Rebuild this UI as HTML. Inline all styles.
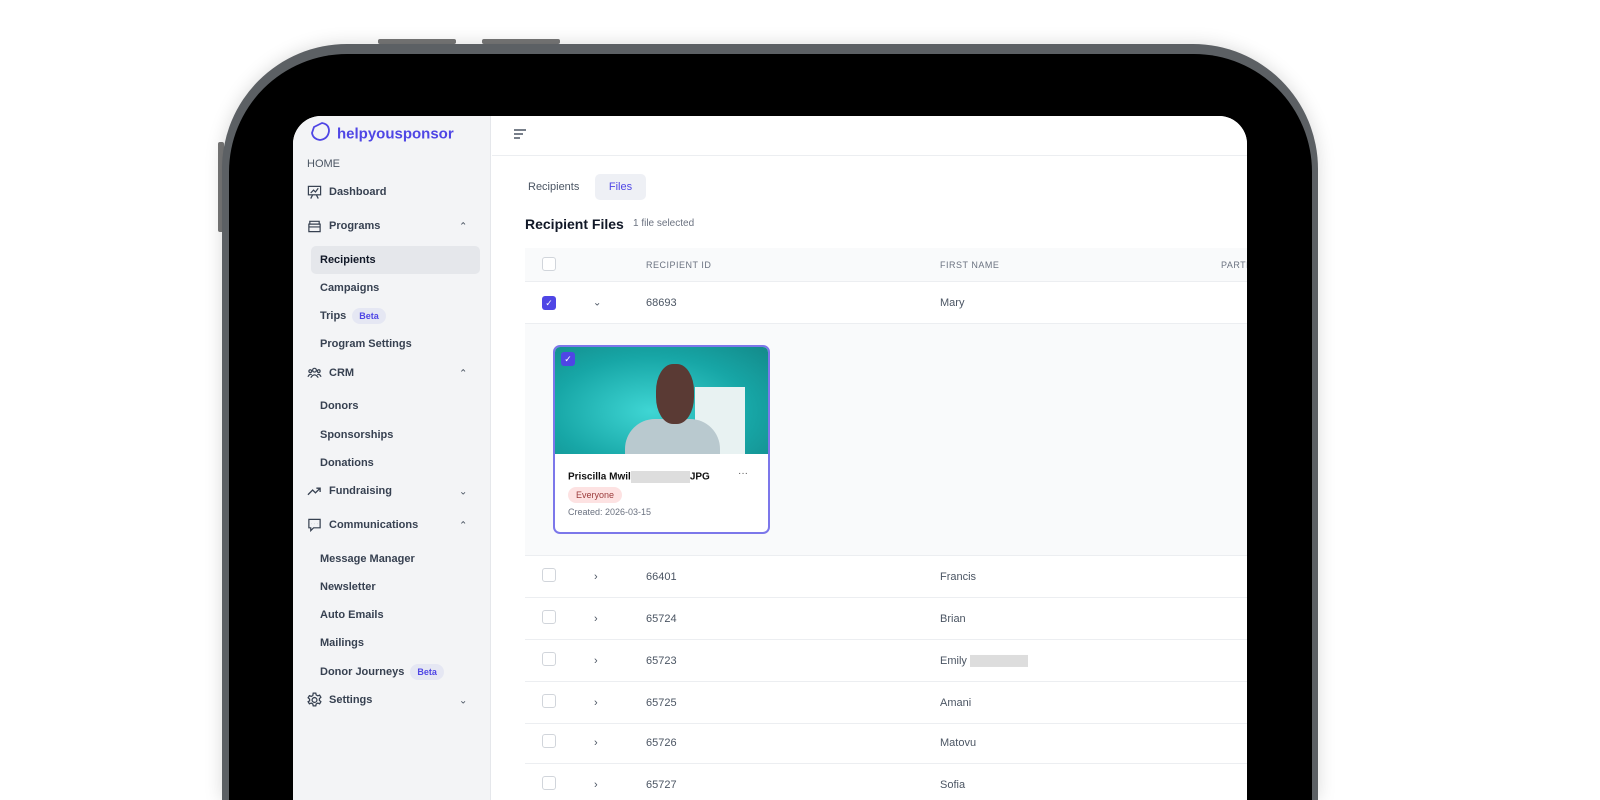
<!DOCTYPE html>
<html><head><style>
*{margin:0;padding:0;box-sizing:border-box}
html,body{width:1600px;height:800px;overflow:hidden;background:#fff}
body{font-family:"Liberation Sans",Arial,sans-serif}
#wrap{position:relative;width:1600px;height:800px;overflow:hidden}
.abs{position:absolute}
.frame{left:222px;top:44px;width:1096px;height:756px;border-radius:125px 125px 0 0;background:#5c6064;box-shadow:0 0 18px rgba(0,0,0,.15)}
.bezel{left:229px;top:54px;width:1083px;height:746px;border-radius:118px 118px 0 0;background:#000}
.screen{left:293px;top:116px;width:954px;height:684px;border-radius:28px 28px 0 0;background:#fff;overflow:hidden}
.side{left:0;top:0;width:198px;height:684px;background:#f3f4f6;border-right:1px solid #e5e7eb}
.si{position:absolute;font-size:11px;color:#374151;font-weight:bold;transform:translateY(-50%)}
.sub{left:27px}
.top{left:14px}
.ico{position:absolute;left:14px;width:15px;height:15px;transform:translateY(-50%)}
.chev{position:absolute;left:166px;font-size:10px;color:#4b5563;transform:translateY(-50%)}
.beta{display:inline-block;background:#e5e7f3;color:#4f46e5;font-size:9px;padding:3px 7px;border-radius:9px;margin-left:6px;font-weight:bold}
.cb{position:absolute;width:14px;height:14px;border:1px solid #d1d5db;border-radius:3px;background:#fff}
.row{position:absolute;left:232px;width:740px;border-bottom:1px solid #eceef1;height:42px}
.row span{position:absolute;top:50%;transform:translateY(-50%);font-size:11px;color:#4b5563}
</style></head><body><div id="wrap">
<div class="abs" style="left:378px;top:39px;width:78px;height:5px;background:#777;border-radius:2px"></div>
<div class="abs" style="left:482px;top:39px;width:78px;height:5px;background:#777;border-radius:2px"></div>
<div class="abs" style="left:218px;top:142px;width:6px;height:90px;background:#777;border-radius:2px"></div>
<div class="abs frame"></div>
<div class="abs bezel"></div>
<div class="abs screen">
 <div class="abs side">
  <svg class="abs" style="left:17px;top:5px" width="22" height="22" viewBox="0 0 22 22"><path d="M4 6 L12 2 Q19 3 19 10 Q18 18 10 19 Q3 18 2 12 Z" fill="none" stroke="#4f46e5" stroke-width="1.8"/></svg>
  <div class="si" style="left:44px;top:18px;font-size:15px;color:#4f46e5">helpyousponsor</div>
  <div class="si top" style="top:48px;font-weight:normal;color:#4b5563">HOME</div>
  <svg class="ico" style="top:76px" viewBox="0 0 16 16" fill="none" stroke="#374151" stroke-width="1.3"><rect x="1.5" y="2" width="13" height="9"/><path d="M4 9l3-3 2 2 3-4M6 11l-2 4M10 11l2 4"/></svg>
  <div class="si" style="left:36px;top:76px">Dashboard</div>
  <svg class="ico" style="top:110px" viewBox="0 0 16 16" fill="none" stroke="#374151" stroke-width="1.3"><path d="M3 3h10v3H3zM2 6h12v8H2zM2 9h12"/></svg>
  <div class="si" style="left:36px;top:110px">Programs</div><div class="chev" style="top:111px">⌃</div>
  <div class="abs" style="left:18px;top:130px;width:169px;height:28px;background:#e5e7eb;border-radius:5px"></div>
  <div class="si sub" style="top:144px;color:#111827">Recipients</div>
  <div class="si sub" style="top:172px">Campaigns</div>
  <div class="si sub" style="top:200px">Trips<span class="beta">Beta</span></div>
  <div class="si sub" style="top:228px">Program Settings</div>
  <svg class="ico" style="top:257px" viewBox="0 0 16 16" fill="none" stroke="#374151" stroke-width="1.3"><circle cx="8" cy="5" r="2"/><circle cx="3.5" cy="6" r="1.5"/><circle cx="12.5" cy="6" r="1.5"/><path d="M4 13q4-6 8 0M1 12q2-4 4-2M15 12q-2-4-4-2"/></svg>
  <div class="si" style="left:36px;top:257px">CRM</div><div class="chev" style="top:258px">⌃</div>
  <div class="si sub" style="top:290px">Donors</div>
  <div class="si sub" style="top:319px">Sponsorships</div>
  <div class="si sub" style="top:347px">Donations</div>
  <svg class="ico" style="top:375px" viewBox="0 0 16 16" fill="none" stroke="#374151" stroke-width="1.4"><path d="M1 12l5-5 3 3 5-5M10 5h4v4"/></svg>
  <div class="si" style="left:36px;top:375px">Fundraising</div><div class="chev" style="top:376px">⌄</div>
  <svg class="ico" style="top:409px" viewBox="0 0 16 16" fill="none" stroke="#374151" stroke-width="1.3"><path d="M2 2h12v9H7l-3 3v-3H2z"/><path d="M5 6.5h.1M8 6.5h.1M11 6.5h.1"/></svg>
  <div class="si" style="left:36px;top:409px">Communications</div><div class="chev" style="top:410px">⌃</div>
  <div class="si sub" style="top:443px">Message Manager</div>
  <div class="si sub" style="top:471px">Newsletter</div>
  <div class="si sub" style="top:499px">Auto Emails</div>
  <div class="si sub" style="top:527px">Mailings</div>
  <div class="si sub" style="top:556px">Donor Journeys<span class="beta">Beta</span></div>
  <svg class="ico" style="top:584px;width:17px;height:17px;left:13px" viewBox="0 0 16 16" fill="none" stroke="#374151" stroke-width="1.2"><circle cx="8" cy="8" r="2.3"/><path d="M6.8 1.5h2.4l.4 1.8 1.5.8 1.7-.7 1.2 2-1.4 1.3v1.6l1.4 1.3-1.2 2-1.7-.7-1.5.8-.4 1.8H6.8l-.4-1.8-1.5-.8-1.7.7-1.2-2L3.4 8.8V7.2L2 5.9l1.2-2 1.7.7 1.5-.8z"/></svg>
  <div class="si" style="left:36px;top:584px">Settings</div><div class="chev" style="top:585px">⌄</div>
 </div>
 <div class="abs" style="left:199px;top:0;width:755px;height:40px;border-bottom:1px solid #eceef1;background:#fff"></div>
 <svg class="abs" style="left:220px;top:12px" width="14" height="12" viewBox="0 0 14 12" stroke="#4b5563" stroke-width="1.4"><path d="M1 2h12M1 6h9M1 10h6"/></svg>
 <div class="abs" style="left:235px;top:65px;font-size:11px;color:#4b5563">Recipients</div>
 <div class="abs" style="left:302px;top:58px;width:51px;height:26px;background:#eef0f5;border-radius:5px;font-size:11px;color:#4f46e5;text-align:center;line-height:26px">Files</div>
 <div class="abs" style="left:232px;top:100px;font-size:14px;font-weight:bold;color:#111827">Recipient Files</div>
 <div class="abs" style="left:340px;top:102px;font-size:10px;color:#6b7280">1 file selected</div>
 <div class="abs" style="left:232px;top:132px;width:740px;height:34px;background:#f9fafb;border-bottom:1px solid #eceef1"></div>
 <div class="cb" style="left:249px;top:141px"></div>
 <div class="abs" style="left:353px;top:144px;font-size:9px;color:#6b7280;letter-spacing:.5px">RECIPIENT ID</div>
 <div class="abs" style="left:647px;top:144px;font-size:9px;color:#6b7280;letter-spacing:.5px">FIRST NAME</div>
 <div class="abs" style="left:928px;top:144px;font-size:9px;color:#6b7280;letter-spacing:.5px">PARTNER</div>
 <div class="row" style="top:166px"><span style="left:17px;width:14px;height:14px;background:#4f46e5;border-radius:3px;color:#fff;font-size:9px;text-align:center;line-height:14px">✓</span><span style="left:68px;font-size:10px">⌄</span><span style="left:121px">68693</span><span style="left:415px">Mary</span></div>
 <div class="abs" style="left:232px;top:208px;width:740px;height:232px;background:#f9fafb;border-bottom:1px solid #eceef1"></div>
 <div class="abs" style="left:260px;top:229px;width:217px;height:189px;border:2px solid #7c77ea;border-radius:7px;background:#fff;overflow:hidden">
  <div class="abs" style="left:0;top:0;width:213px;height:107px;background:radial-gradient(ellipse at 45% 60%,#3fd6d4,#17a6a6 60%,#138a8a)"></div>
  <div class="abs" style="left:140px;top:40px;width:50px;height:67px;background:#e8f2f2"></div>
  <div class="abs" style="left:70px;top:72px;width:95px;height:35px;background:#b9c9cf;border-radius:30px 30px 0 0"></div>
  <div class="abs" style="left:101px;top:17px;width:38px;height:60px;background:#5a3a34;border-radius:45%"></div>
  <div class="abs" style="left:6px;top:5px;width:14px;height:14px;background:#4f46e5;border-radius:3px;color:#fff;font-size:9px;text-align:center;line-height:14px">✓</div>
  <div class="abs" style="left:13px;top:124px;font-size:10px;font-weight:bold;color:#111">Priscilla Mwil<span style="display:inline-block;width:59px;height:12px;background:#ddd;vertical-align:middle"></span>JPG</div>
  <div class="abs" style="left:183px;top:121px;font-size:10px;color:#555">···</div>
  <div class="abs" style="left:13px;top:140px;background:#fde2e2;color:#9b3b3b;font-size:9px;padding:3px 8px;border-radius:8px">Everyone</div>
  <div class="abs" style="left:13px;top:160px;font-size:9px;color:#6b7280">Created: 2026-03-15</div>
 </div>
 <div class="row" style="top:440px"><div class="cb" style="left:17px;top:12px"></div><span style="left:69px">›</span><span style="left:121px">66401</span><span style="left:415px">Francis</span></div>
 <div class="row" style="top:482px"><div class="cb" style="left:17px;top:12px"></div><span style="left:69px">›</span><span style="left:121px">65724</span><span style="left:415px">Brian</span></div>
 <div class="row" style="top:524px"><div class="cb" style="left:17px;top:12px"></div><span style="left:69px">›</span><span style="left:121px">65723</span><span style="left:415px">Emily <i style="display:inline-block;width:58px;height:12px;background:#ddd;vertical-align:middle"></i></span></div>
 <div class="row" style="top:566px"><div class="cb" style="left:17px;top:12px"></div><span style="left:69px">›</span><span style="left:121px">65725</span><span style="left:415px">Amani</span></div>
 <div class="row" style="top:606px"><div class="cb" style="left:17px;top:12px"></div><span style="left:69px">›</span><span style="left:121px">65726</span><span style="left:415px">Matovu</span></div>
 <div class="row" style="top:648px"><div class="cb" style="left:17px;top:12px"></div><span style="left:69px">›</span><span style="left:121px">65727</span><span style="left:415px">Sofia</span></div>
</div>
</div></body></html>
